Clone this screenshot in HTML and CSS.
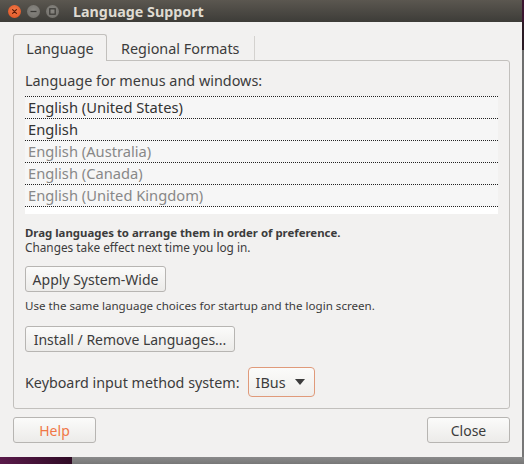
FILE: index.html
```html
<!DOCTYPE html>
<html>
<head>
<meta charset="utf-8">
<link rel="stylesheet" href="styles.css">
</head>
<body>
<div class="screen">
  <div class="window">
    <div class="titlebar">
      <div class="wbtns">
        <span class="wbtn close"><svg width="13" height="13" viewBox="0 0 13 13"><path d="M4.6 4.6 L8.4 8.4 M8.4 4.6 L4.6 8.4" stroke="#5a1a08" stroke-width="1.2" stroke-linecap="round"/></svg></span>
        <span class="wbtn"><svg width="13" height="13" viewBox="0 0 13 13"><path d="M3.5 6.5 H9.5" stroke="#3a3935" stroke-width="1.3"/></svg></span>
        <span class="wbtn"><svg width="13" height="13" viewBox="0 0 13 13"><rect x="3.8" y="3.8" width="5.4" height="5.4" fill="none" stroke="#3a3935" stroke-width="1.2"/></svg></span>
      </div>
      <div class="title">Language Support</div>
    </div>
    <div class="content">
      <div class="tabs">
        <div class="tab active">Language</div>
        <div class="tab">Regional Formats</div>
      </div>
      <div class="frame">
        <div class="label">Language for menus and windows:</div>
        <div class="list">
          <div class="row">English (United States)</div>
          <div class="row">English</div>
          <div class="row dim">English (Australia)</div>
          <div class="row dim">English (Canada)</div>
          <div class="row dim last">English (United Kingdom)</div>
        </div>
        <div class="note bold">Drag languages to arrange them in order of preference.</div>
        <div class="note">Changes take effect next time you log in.</div>
        <div class="btn apply">Apply System-Wide</div>
        <div class="small">Use the same language choices for startup and the login screen.</div>
        <div class="btn install">Install / Remove Languages...</div>
        <div class="kbd">
          <span class="klabel">Keyboard input method system:</span>
          <div class="combo"><span>IBus</span><svg width="10" height="6" viewBox="0 0 10 6"><path d="M0 0 H10 L5 6 Z" fill="#3c3c3c"/></svg></div>
        </div>
      </div>
      <div class="actions">
        <div class="btn dlg help">Help</div>
        <div class="btn dlg">Close</div>
      </div>
    </div>
  </div>
  <div class="rstrip"></div>
</div>
<div class="bstrip"><div class="purple"></div><div class="shadow"></div></div>
</body>
</html>
```
FILE: styles.css
```css
html, body { margin: 0; padding: 0; }
body {
  width: 524px;
  height: 464px;
  overflow: hidden;
  background: #7b7b7b;
  font-family: "Noto Sans", "DejaVu Sans", sans-serif;
  color: #3c3c3c;
  font-size: 13px;
}
.screen { display: flex; }
.window {
  width: 522px;
  height: 457px;
  background: #f2f1f0;
  display: flex;
  flex-direction: column;
}
.rstrip {
  width: 2px;
  height: 457px;
  background: linear-gradient(#3b1530 0, #3b1530 22px, #2a1a24 22px, #2a1a24 50px, #6d6d6d 50px, #777 457px);
}
.bstrip { display: flex; height: 7px; }
.purple { width: 72px; background: linear-gradient(90deg, #5a1a4a, #2f0b25); }
.shadow { flex: 1; background: linear-gradient(#8a8a8a, #777); }

.titlebar {
  height: 22px;
  background: linear-gradient(#5b5750, #3d3c38);
  display: flex;
  align-items: center;
  padding-left: 8px;
}
.wbtns { display: flex; gap: 6px; }
.wbtn {
  width: 13px; height: 13px; border-radius: 50%;
  background: radial-gradient(circle at 50% 40%, #8a8883, #6d6b66);
  display: flex;
}
.wbtn.close { background: radial-gradient(circle at 50% 40%, #f27a4a, #e0501e); }
.title {
  margin-left: 14px;
  color: #dfdbd2;
  font-weight: bold;
  font-size: 14.3px;
}
.content {
  flex: 1;
  display: flex;
  flex-direction: column;
  padding: 12px 12px 0 13px;
}
.tabs { display: flex; height: 26px; }
.tab {
  padding: 0 14px;
  display: flex;
  align-items: center;
  font-size: 14.4px;
  position: relative;
}
.tab.active {
  width: 94px;
  box-sizing: border-box;
  justify-content: center;
  border: 1px solid #c2c0bd;
  border-bottom: none;
  border-radius: 3px 3px 0 0;
  background: #f2f1f0;
  height: 27px;
  margin-bottom: -1px;
  z-index: 1;
}
.tab:not(.active) {
  border-right: 1px solid #d4d2cf;
  margin: 2px 0 0 0;
  height: 24px;
}
.frame {
  border: 1px solid #c2c0bd;
  border-radius: 0 3px 3px 3px;
  height: 349px;
  box-sizing: border-box;
  padding: 10px 11px 0 11px;
  display: flex;
  flex-direction: column;
  align-items: flex-start;
}
.label { line-height: 20px; font-size: 14.4px; }
.list {
  margin-top: 5px;
  width: 473px;
  height: 118px;
  background: #fff;
}
.row {
  height: 21px;
  border-top: 1px dotted #222;
  background: #f6f6f6;
  padding-left: 3px;
  line-height: 21px;
  font-size: 14.7px;
  color: #333;
}
.row.dim { color: #888; }
.row.last { border-bottom: 1px dotted #222; }
.note {
  font-size: 11.8px;
  line-height: 14px;
}
.note.bold { margin-top: 12px; font-weight: bold; font-size: 11.4px; }
.btn {
  height: 26px;
  box-sizing: border-box;
  border: 1px solid #b7b5b2;
  border-radius: 3px;
  background: linear-gradient(#fbfbfa, #ecebe9);
  display: flex;
  align-items: center;
  justify-content: center;
  padding: 0 6px;
  font-size: 14px;
}
.apply { margin-top: 12px; width: 141px; }
.small { margin-top: 7px; font-size: 11.6px; line-height: 14px; }
.install { margin-top: 13px; width: 210px; }
.kbd {
  margin-top: 15px;
  display: flex;
  align-items: center;
  gap: 8px;
}
.klabel { font-size: 14.3px; }
.combo {
  width: 67px; height: 30px;
  box-sizing: border-box;
  border: 1px solid #e09a7a;
  border-radius: 4px;
  background: linear-gradient(#fbfbfa, #efeeec);
  display: flex;
  align-items: center;
  justify-content: space-between;
  padding: 0 9px 0 7px;
  font-size: 14.4px;
}
.actions {
  margin-top: 8px;
  display: flex;
  justify-content: space-between;
}
.dlg { width: 83px; }
.help { color: #f07746; }
```
